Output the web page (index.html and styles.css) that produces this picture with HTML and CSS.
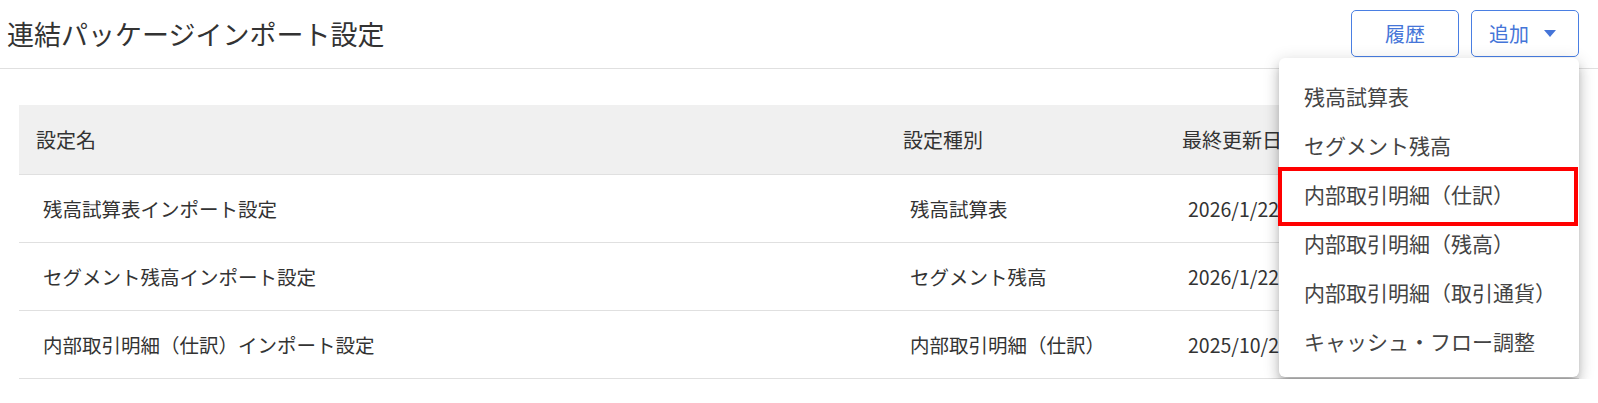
FILE: index.html
```html
<!DOCTYPE html>
<html lang="ja">
<head>
<meta charset="utf-8">
<title>連結パッケージインポート設定</title>
<link rel="stylesheet" href="styles.css">
</head>
<body>
<header class="page-header">
  <h1 class="page-title">連結パッケージインポート設定</h1>
  <div class="actions">
    <button class="btn">履歴</button>
    <div class="add-wrap">
      <button class="btn btn-add">追加<span class="caret"></span></button>
      <ul class="menu">
        <li class="menu-item">残高試算表</li>
        <li class="menu-item">セグメント残高</li>
        <li class="menu-item">内部取引明細（仕訳）</li>
        <li class="menu-item">内部取引明細（残高）</li>
        <li class="menu-item">内部取引明細（取引通貨）</li>
        <li class="menu-item">キャッシュ・フロー調整</li>
      </ul>
      <div class="highlight"></div>
    </div>
  </div>
</header>
<main class="content">
  <table class="settings">
    <colgroup>
      <col class="c-name">
      <col class="c-type">
      <col class="c-date">
    </colgroup>
    <thead>
      <tr><th>設定名</th><th>設定種別</th><th>最終更新日</th></tr>
    </thead>
    <tbody>
      <tr><td>残高試算表インポート設定</td><td>残高試算表</td><td>2026/1/22</td></tr>
      <tr><td>セグメント残高インポート設定</td><td>セグメント残高</td><td>2026/1/22</td></tr>
      <tr><td>内部取引明細（仕訳）インポート設定</td><td>内部取引明細（仕訳）</td><td>2025/10/2</td></tr>
    </tbody>
  </table>
</main>
</body>
</html>
```

FILE: styles.css
```css
* { box-sizing: border-box; }
html, body {
  margin: 0;
  padding: 0;
  background: #fff;
  font-family: "Noto Sans CJK JP", "Noto Sans", sans-serif;
  color: #333;
}
.page-header {
  display: flex;
  align-items: center;
  justify-content: space-between;
  height: 69px;
  padding: 0 19px 1px 7px;
  border-bottom: 1px solid #e0e0e0;
}
.page-title {
  margin: 0;
  font-size: 27px;
  font-weight: 400;
  line-height: 34px;
  color: #333;
}
.actions {
  display: flex;
  gap: 12px;
  align-items: center;
}
.btn {
  width: 108px;
  height: 47px;
  border: 1px solid #4a7fe3;
  border-radius: 5px;
  background: #fff;
  color: #4575d8;
  font-family: inherit;
  font-size: 20px;
  line-height: 1;
  display: flex;
  align-items: center;
  justify-content: center;
  padding: 0;
}
.btn-add {
  justify-content: flex-start;
  padding-left: 17px;
}
.caret {
  width: 0;
  height: 0;
  margin-left: 15px;
  border-left: 6px solid transparent;
  border-right: 6px solid transparent;
  border-top: 7px solid #4575d8;
}
.add-wrap {
  position: relative;
}
.menu {
  position: absolute;
  top: 48px;
  right: 0;
  width: 300px;
  margin: 0;
  padding: 13px 0 12px;
  list-style: none;
  background: #fff;
  border-radius: 6px;
  box-shadow: 0 5px 6px -3px rgba(0,0,0,0.2), 0 9px 12px 1px rgba(0,0,0,0.14), 0 3px 16px 2px rgba(0,0,0,0.12);
  z-index: 10;
}
.menu-item {
  height: 49px;
  display: flex;
  align-items: center;
  padding-left: 25px;
  font-size: 21px;
  color: #444;
  white-space: nowrap;
}
.highlight {
  position: absolute;
  top: 157px;
  right: 1px;
  width: 300px;
  height: 59px;
  border: 4px solid #f00;
  z-index: 11;
}
.content {
  padding: 36px 19px 0;
}
.settings {
  width: 100%;
  border-collapse: collapse;
  table-layout: fixed;
  font-size: 20px;
}
.c-name { width: 867px; }
.c-type { width: 279px; }
.settings th {
  background: #f0f0f0;
  height: 69px;
  text-align: left;
  font-weight: 400;
  padding: 0 0 0 17px;
  border-bottom: 1px solid #e0e0e0;
  color: #333;
}
.settings td {
  height: 68px;
  padding: 0 0 0 24px;
  border-bottom: 1px solid #e0e0e0;
  color: #333;
  font-size: 19.5px;
  white-space: nowrap;
  overflow: hidden;
}
.settings td:nth-child(3) { padding-left: 23px; }
```
